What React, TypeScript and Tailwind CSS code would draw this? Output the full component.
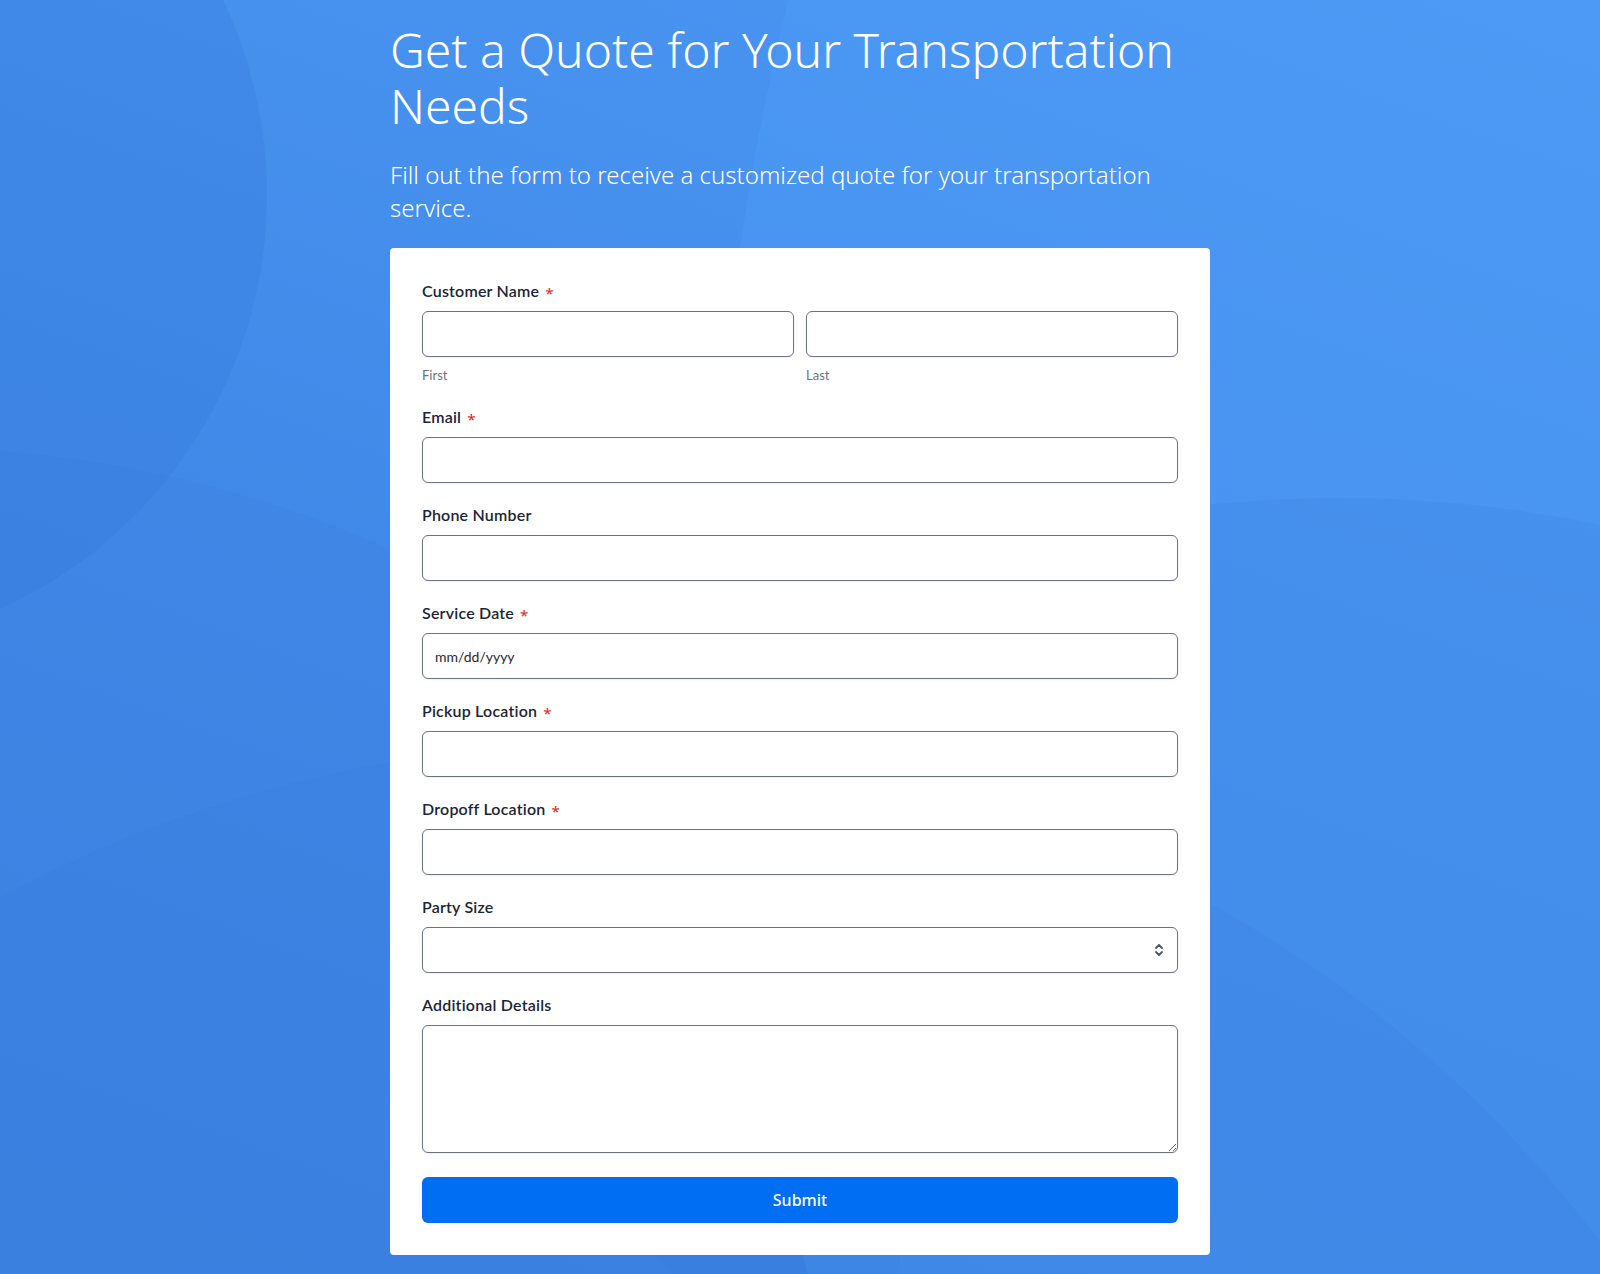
import React from "react";

type FieldProps = {
  label: string;
  required?: boolean;
  children: React.ReactNode;
};

const inputClass =
  "block h-[46px] w-full rounded-md border border-[#6b7280] bg-white px-3 text-[14px] text-[#1f2937] shadow-[0_1px_2px_rgba(0,0,0,0.06)] outline-none";

function Label({ text, required }: { text: string; required?: boolean }) {
  return (
    <label className="mb-[10px] flex items-center gap-[6px] text-[16px] font-semibold leading-5 tracking-[0.2px] text-[#1b2537]">
      {text}
      {required ? (
        <span
          className="translate-y-[2px] text-[15px] font-normal leading-none text-[#dc2626]"
          style={{ fontFamily: '"Noto Sans", sans-serif' }}
        >
          *
        </span>
      ) : null}
    </label>
  );
}

function Field({ label, required, children }: FieldProps) {
  return (
    <div className="flex flex-col">
      <Label text={label} required={required} />
      {children}
    </div>
  );
}

function Background() {
  return (
    <div className="pointer-events-none absolute inset-0 overflow-hidden">
      {/* lighter sweep on the top right */}
      <div className="absolute left-[715px] top-[-1900px] h-[5000px] w-[5000px] rounded-full bg-[#51a0f8]/35" />
      {/* darker circle top left */}
      <div className="absolute left-[-641px] top-[-259px] h-[908px] w-[908px] rounded-full bg-[#2f74d8]/20" />
      {/* wide band on the left */}
      <div className="absolute left-[-1100px] top-[447px] h-[1600px] w-[2000px] rounded-[50%] bg-[#2f74d8]/12" />
      {/* ellipse on the right */}
      <div className="absolute left-[540px] top-[498px] h-[1000px] w-[1600px] rounded-[50%] bg-[#2f74d8]/12" />
      {/* bottom curve */}
      <div className="absolute left-[-655px] top-[745px] h-[2510px] w-[2510px] rounded-full bg-[#2f74d8]/10" />
    </div>
  );
}

export default function App() {
  return (
    <div
      className="relative min-h-[1274px] w-full overflow-hidden bg-[linear-gradient(20deg,#3c84e2_0%,#4189e8_45%,#4b97f4_100%)]"
      style={{ fontFamily: '"Noto Sans", "Open Sans", sans-serif' }}
    >
      <Background />
      <main className="relative mx-auto w-[820px] pt-[22px]">
        <h1 className="text-[48px] font-light leading-[56px] text-white">
          Get a Quote for Your Transportation Needs
        </h1>
        <p className="mt-[24px] text-[24px] font-light leading-[33px] text-white">
          Fill out the form to receive a customized quote for your transportation service.
        </p>
        <form
          className="mt-[24px] flex flex-col gap-[22px] rounded bg-white px-8 pb-8 pt-[33px]"
          style={{ fontFamily: 'Lato, "Noto Sans", sans-serif' }}
        >
          <div className="flex flex-col pb-[2px]">
            <Label text="Customer Name" required />
            <div className="grid grid-cols-2 gap-3">
              <div>
                <input className={inputClass} type="text" />
                <span className="mt-[10px] block text-[13px] leading-4 text-[#6b7280]">First</span>
              </div>
              <div>
                <input className={inputClass} type="text" />
                <span className="mt-[10px] block text-[13px] leading-4 text-[#6b7280]">Last</span>
              </div>
            </div>
          </div>

          <Field label="Email" required>
            <input className={inputClass} type="email" />
          </Field>

          <Field label="Phone Number">
            <input className={inputClass} type="tel" />
          </Field>

          <Field label="Service Date" required>
            <input className={`${inputClass} placeholder:text-[#1f2937]`} placeholder="mm/dd/yyyy" type="text" />
          </Field>

          <Field label="Pickup Location" required>
            <input className={inputClass} type="text" />
          </Field>

          <Field label="Dropoff Location" required>
            <input className={inputClass} type="text" />
          </Field>

          <Field label="Party Size">
            <div className="relative">
              <select className={`${inputClass} appearance-none`} defaultValue="">
                <option value="" />
                <option>1</option>
                <option>2</option>
                <option>3-5</option>
                <option>6+</option>
              </select>
              <svg
                className="absolute right-[14px] top-1/2 h-[16px] w-[10px] -translate-y-1/2 text-[#4b5563]"
                viewBox="0 0 10 16"
                fill="none"
                stroke="currentColor"
                strokeWidth="1.8"
                strokeLinecap="round"
                strokeLinejoin="round"
              >
                <path d="M2 6l3-3 3 3" />
                <path d="M2 10l3 3 3-3" />
              </svg>
            </div>
          </Field>

          <Field label="Additional Details">
            <textarea className="block h-[128px] w-full rounded-md border border-[#6b7280] bg-white px-3 py-2 text-[14px] text-[#1f2937] shadow-[0_1px_2px_rgba(0,0,0,0.06)] outline-none" />
          </Field>

          <button
            className="mt-[2px] h-[46px] w-full rounded-md bg-[#006ef3] text-[16px] font-medium text-white"
            style={{ fontFamily: '"Noto Sans", sans-serif' }}
            type="button"
          >
            Submit
          </button>
        </form>
      </main>
    </div>
  );
}
